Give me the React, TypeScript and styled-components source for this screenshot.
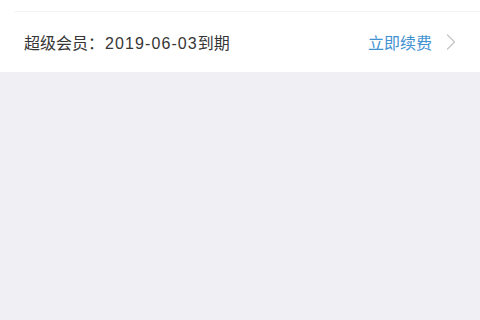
import React from 'react';
import styled, { createGlobalStyle } from 'styled-components';

const GlobalStyle = createGlobalStyle`
  html, body {
    margin: 0;
    padding: 0;
    height: 100%;
    background-color: #efeff4;
  }
  #root {
    min-height: 100%;
  }
  body {
    font-family: "Noto Sans CJK SC", "Liberation Sans", sans-serif;
  }
`;

const Page = styled.div`
  width: 480px;
  height: 320px;
  background-color: #efeff4;
`;

const Card = styled.div`
  background-color: #ffffff;
  padding-top: 11px;
`;

const Divider = styled.div`
  height: 1px;
  margin-left: 14px;
  background-color: #f4f4f6;
`;

const Row = styled.div`
  display: flex;
  align-items: center;
  justify-content: space-between;
  height: 60px;
  padding: 0 24px 0 24px;
`;

const Label = styled.span`
  font-size: 16px;
  color: #363636;
`;

const DateText = styled.span`
  font-family: "Liberation Sans", sans-serif;
  letter-spacing: 1.1px;
  margin-left: 1px;
`;

const Action = styled.a`
  display: flex;
  align-items: center;
  gap: 14px;
  font-size: 16px;
  color: #3f92d2;
  text-decoration: none;
`;

const Chevron = () => (
  <svg width="10" height="16" viewBox="0 0 10 16" fill="none">
    <path d="M1.5 1 L8.5 8 L1.5 15" stroke="#c4c4c8" strokeWidth="1.2" strokeLinecap="round" strokeLinejoin="round" />
  </svg>
);

export default function App() {
  return (
    <Page>
      <GlobalStyle />
      <Card>
        <Divider />
        <Row>
          <Label>
            超级会员：<DateText>2019-06-03</DateText>到期
          </Label>
          <Action href="#">
            立即续费
            <Chevron />
          </Action>
        </Row>
      </Card>
    </Page>
  );
}
